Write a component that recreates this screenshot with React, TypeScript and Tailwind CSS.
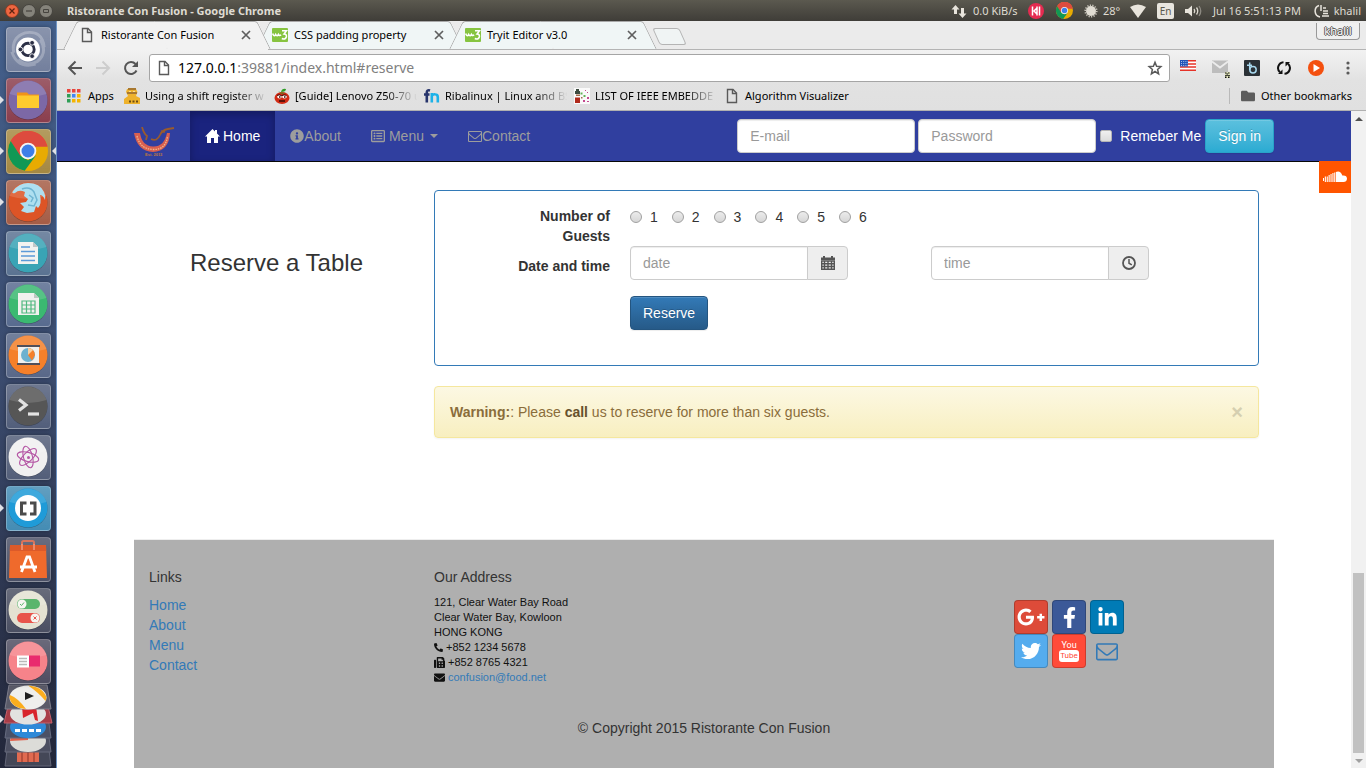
import React from 'react';
import {
  FaEnvelope,
  FaFacebookF,
  FaFax,
  FaFolder,
  FaGooglePlusG,
  FaInfoCircle,
  FaLinkedinIn,
  FaPhoneAlt,
  FaRegListAlt,
  FaTwitter,
} from 'react-icons/fa';

type Kids = { children?: React.ReactNode };

const UI = "font-['Noto_Sans','Open_Sans',sans-serif]";

/* ---------- shared icons ---------- */

function PageIcon({ className = '' }: { className?: string }) {
  return (
    <svg viewBox="0 0 16 16" className={`size-4 shrink-0 ${className}`} fill="none" stroke="#5a5a5a" strokeWidth="1.4" aria-hidden="true">
      <path d="M3.5 1.5h5.5l3.5 3.5v9.5h-9z" />
      <path d="M8.5 1.5v4h4" />
    </svg>
  );
}

function ChromeLogo({ className = '' }: { className?: string }) {
  return (
    <svg viewBox="0 0 48 48" className={className} aria-hidden="true">
      <circle cx="24" cy="24" r="24" fill="#e8ab02" />
      <path d="M24 13h21.300A24 24 0 0 0 3.200 12L14 30z" fill="#dd4b3e" />
      <path d="M24 19h23.500A24 24 0 0 0 3.200 12L14 30z" fill="#dd4b3e" />
      <path d="M3.200 12A24 24 0 0 0 20 47.700L33.500 29.500 24 35 14.500 29.500z" fill="#109855" />
      <circle cx="24" cy="24" r="10" fill="#f5f5f5" />
      <circle cx="24" cy="24" r="7.800" fill="#3e7ee8" />
    </svg>
  );
}

function W3Icon() {
  return (
    <svg viewBox="0 0 16 16" className="size-4 shrink-0" aria-hidden="true">
      <rect y="1" width="16" height="14" rx="1" fill="#86c440" />
      <path d="M1 6.500v1q1.300 2.500 2.700 0 1.300 2.500 2.700 0 .6 1.500 2.800.5" fill="none" stroke="#fff" strokeWidth="1.600" />
      <path d="M10 3.700h4.500L12 7q2.800.2 2.300 3-.8 3-4.500 1.500" fill="none" stroke="#fff" strokeWidth="1.600" />
    </svg>
  );
}

function CloseIcon() {
  return (
    <svg viewBox="0 0 10 10" className="size-[10px]" stroke="#5f5f5f" strokeWidth="1.700" aria-hidden="true">
      <path d="M1 1l8 8M9 1l-8 8" />
    </svg>
  );
}

function EnvelopeOutline({ className = '' }: { className?: string }) {
  return (
    <svg viewBox="0 0 1792 1792" fill="currentColor" className={className} aria-hidden="true">
      <path d="M1664 1504v-768q-32 36-69 66-268 206-426 338-51 43-83 67t-86.500 48.500-102.500 24.500h-2q-48 0-102.500-24.500t-86.500-48.500-83-67q-158-132-426-338-37-30-69-66v768q0 13 9.500 22.500t22.500 9.500h1472q13 0 22.500-9.500t9.500-22.500zm0-1051v-24.500l-.5-13-3-12.500-5.500-9-9-7.500-14-2.500h-1472q-13 0-22.500 9.500t-9.500 22.500q0 168 147 284 193 152 401 317 6 5 35 29.500t46 37.500 44.500 31.500 50.500 27.500 43 9h2q20 0 43-9t50.500-27.500 44.500-31.500 46-37.500 35-29.500q208-165 401-317 54-43 100.500-115.500t46.500-131.500zm128-37v1088q0 66-47 113t-113 47h-1472q-66 0-113-47t-47-113v-1088q0-66 47-113t113-47h1472q66 0 113 47t47 113z" />
    </svg>
  );
}

/* ---------- desktop top panel ---------- */

function TopPanel() {
  return (
    <header className={`flex h-[21px] shrink-0 items-center bg-linear-to-b from-[#5b594f] to-[#3f3d38] pr-[3px] text-[11px] leading-4 text-[#dfdbd2] ${UI}`}>
      <div className="flex gap-[3px] pl-[5px]">
        <button aria-label="Close window" className="grid size-[14px] place-items-center rounded-full border border-[#8c3a20] bg-[#ee6640]">
          <svg viewBox="0 0 6 6" className="size-[6px]" stroke="#5b2211" strokeWidth="1.200"><path d="M.5.500l5 5M5.500.500l-5 5" /></svg>
        </button>
        <button aria-label="Minimize window" className="grid size-[14px] place-items-center rounded-full border border-[#45433e] bg-[#85837b]">
          <svg viewBox="0 0 6 6" className="size-[6px]" stroke="#46443f" strokeWidth="1.200"><path d="M0 3h6" /></svg>
        </button>
        <button aria-label="Restore window" className="grid size-[14px] place-items-center rounded-full border border-[#45433e] bg-[#85837b]">
          <svg viewBox="0 0 6 6" className="size-[6px]" fill="none" stroke="#46443f"><path d="M.5 1.500h5v3h-5z" /></svg>
        </button>
      </div>
      <h1 className="flex-1 pl-[14px] font-bold whitespace-nowrap">Ristorante Con Fusion - Google Chrome</h1>
      <div className="flex items-center whitespace-nowrap">
        <span className="flex w-[71px] items-center gap-[6px]">
          <svg viewBox="0 0 16 16" className="size-4" fill="#e8e4dc" aria-hidden="true">
            <path d="M4.500 2 8.500 6.500H6V11H3V6.500H.5zM11.500 15 7.500 10.500H10V5h3v5.500h2.500z" />
          </svg>
          0.0 KiB/s
        </span>
        <span className="w-7">
          <svg viewBox="0 0 16 16" className="mx-auto size-4" aria-hidden="true">
            <circle cx="8" cy="8" r="8" fill="#e52b50" />
            <path d="M4.500 3.500v9M11.500 3.500v9M9 3.500V12.500M9.500 4.500 6 8l3.500 3.500" stroke="#fff" strokeWidth="1.500" fill="none" />
          </svg>
        </span>
        <span className="w-7"><ChromeLogo className="mx-auto size-[17px]" /></span>
        <span className="flex w-[47px] items-center gap-[5px] pl-[6px]">
          <svg viewBox="0 0 14 14" className="size-[14px]" aria-hidden="true">
            <circle cx="7" cy="7" r="5" fill="#e0dcd2" />
            <circle cx="7" cy="7" r="5.700" fill="none" stroke="#c8c4ba" strokeWidth="1.800" strokeDasharray="1.200 1.300" />
          </svg>
          28°
        </span>
        <span className="w-[25px]">
          <svg viewBox="0 0 16 14" className="mx-auto h-[14px] w-4" fill="#e8e4dc" aria-hidden="true"><path d="M0 3q8-5 16 0L8 14z" /></svg>
        </span>
        <span className="flex w-[31px] justify-center">
          <span className="rounded-[2px] bg-[#e8e5de] px-[3px] text-[10px] text-[#5b594f]">En</span>
        </span>
        <span className="w-6">
          <svg viewBox="0 0 18 14" className="mx-auto h-[14px] w-[18px]" fill="none" stroke="#dfdbd2" strokeWidth="1.300" aria-hidden="true">
            <path d="M1 5h3l4-3.500v11L4 9H1z" fill="#e8e4dc" stroke="none" />
            <path d="M10 5q1.500 2 0 4M12.500 3.500q2.500 3.500 0 7" />
            <path d="M15 2q3.500 5 0 10" stroke="#8d8a82" />
          </svg>
        </span>
        <span className="w-[104px] text-center">Jul 16 5:51:13 PM</span>
        <span className="flex w-[54px] items-center justify-between pr-[2px] pl-[5px]">
          <svg viewBox="0 0 16 14" className="h-[14px] w-4" fill="none" stroke="#e8e4dc" strokeWidth="1.500" aria-hidden="true">
            <path d="M5 1.500A6 6 0 0 0 6 13M7 1v6M9 4h3M9 7h5M9 9.500h5M8 12h7" />
          </svg>
          khalil
        </span>
      </div>
    </header>
  );
}

/* ---------- launcher ---------- */

function Disc({ color, children }: Kids & { color: string }) {
  return (
    <svg viewBox="0 0 40 40" className="size-10" aria-hidden="true">
      <circle cx="20" cy="20.500" r="19.500" fill="#000" opacity=".3" />
      <circle cx="20" cy="20" r="19.500" fill={color} />
      <path d="M1.500 14A19.500 19.500 0 0 1 38.500 14Q20 20 1.500 14z" fill="#fff" opacity=".14" />
      {children}
    </svg>
  );
}

const apps: { name: string; tile: string; running?: boolean; icon: React.ReactNode }[] = [
  {
    name: 'Search your computer',
    tile: 'bg-[#6c7998]',
    icon: (
      <svg viewBox="0 0 42 42" className="size-10" aria-hidden="true">
        <g fill="none" stroke="#fff" strokeWidth="3" opacity=".25">
          <path d="M6 25Q3 9 18 4q18-3 20 15" />
          <path d="M34 11q8 14-3 23-12 6-20-2" />
          <path d="M29 37Q10 42 4 24" />
        </g>
        <circle cx="21" cy="21.500" r="12.500" fill="#fff" />
        <circle cx="21" cy="21.500" r="6.500" fill="none" stroke="#2b2f45" strokeWidth="3" />
        <g fill="#2b2f45" stroke="#fff" strokeWidth=".9">
          <circle cx="13" cy="21.500" r="2.500" />
          <circle cx="25.300" cy="14.500" r="2.500" />
          <circle cx="25.300" cy="28.500" r="2.500" />
        </g>
      </svg>
    ),
  },
  {
    name: 'Files',
    tile: 'bg-[#843444]',
    running: true,
    icon: (
      <Disc color="#7c68a6">
        <path d="M9 12.500h10l2 2H31v4H9z" fill="#f09319" />
        <path d="M9 15.500h22v12.500H9z" fill="#fecb2e" />
      </Disc>
    ),
  },
  { name: 'Google Chrome', tile: 'bg-[#a08238]', running: true, icon: <ChromeLogo className="size-10" /> },
  {
    name: 'Firefox',
    tile: 'bg-[#a0543c]',
    running: true,
    icon: (
      <Disc color="#dd5426">
        <path d="M5 9Q11 1 20 1q12 0 16 9 2 4 1 8-2-5-5-5 2 9-2 13l-2-2-2 6-7 1-6-2 3-4-4-4 6-1 2-3-4-3 1-4q-6-3-10 1-4 1-2-2z" fill="#aedff0" />
        <path d="M14 7q8-3 12 3l3 8-3 6-6-1M21 13l4 3-2 4" fill="none" stroke="#6fb5d2" strokeWidth="1.500" />
      </Disc>
    ),
  },
  {
    name: 'Writer',
    tile: 'bg-[#526b8c]',
    icon: (
      <Disc color="#39a4b5">
        <path d="M10 9h15l5 5v17H10z" fill="#f3f3f0" />
        <path d="M25 9v5h5z" fill="#c2c8c8" />
        <path d="M13 14h9M13 18.500h14M13 23h14M13 27.500h14" stroke="#5b9ad8" strokeWidth="1.600" />
      </Disc>
    ),
  },
  {
    name: 'Calc',
    tile: 'bg-[#4f6389]',
    icon: (
      <Disc color="#3bb971">
        <path d="M10 9h16l5 5v17H10z" fill="#f1f1ee" />
        <path d="M26 9v5h5z" fill="#bfc8c2" />
        <path d="M14 17h13v12H14zM14 21h13M14 25h13M18.500 17v12M23 17v12" fill="none" stroke="#52b981" strokeWidth="1.200" />
      </Disc>
    ),
  },
  {
    name: 'Impress',
    tile: 'bg-[#506082]',
    icon: (
      <Disc color="#f5802a">
        <path d="M10 11h21v17H10z" fill="#f1f1ee" />
        <path d="M9 11h23M9 29h23" stroke="#50505a" strokeWidth="1.800" />
        <circle cx="20" cy="20" r="7" fill="#6db1cf" />
        <path d="M20 20v-7a7 7 0 0 1 7 7l-3 5.500z" fill="#f5802a" />
        <path d="M20 20v-7a7 7 0 0 1 5 2z" fill="#f7cfa0" />
      </Disc>
    ),
  },
  {
    name: 'Terminal',
    tile: 'bg-[#495674]',
    icon: (
      <Disc color="#565656">
        <path d="M11 13.500l7 5.500-7 5.500" fill="none" stroke="#e3e3e3" strokeWidth="3.200" />
        <path d="M20 28h11" stroke="#e3e3e3" strokeWidth="3.200" />
      </Disc>
    ),
  },
  {
    name: 'Atom',
    tile: 'bg-[#4a5672]',
    icon: (
      <Disc color="#f0f0f0">
        <g fill="none" stroke="#b557a5" strokeWidth="1.100">
          <ellipse cx="20" cy="20" rx="11" ry="4.500" transform="rotate(15 20 20)" />
          <ellipse cx="20" cy="20" rx="11" ry="4.500" transform="rotate(75 20 20)" />
          <ellipse cx="20" cy="20" rx="11" ry="4.500" transform="rotate(135 20 20)" />
        </g>
        <circle cx="20.500" cy="20.500" r="1.500" fill="#b557a5" />
      </Disc>
    ),
  },
  {
    name: 'Brackets',
    tile: 'bg-[#3a86b0]',
    running: true,
    icon: (
      <Disc color="#1f9bd8">
        <circle cx="20" cy="20" r="13" fill="#fff" />
        <path d="M18.500 15h-5v11h5M22 15h5v11h-5" fill="none" stroke="#4b4b4b" strokeWidth="3" />
      </Disc>
    ),
  },
  {
    name: 'Ubuntu Software',
    tile: 'bg-[#42485f]',
    icon: (
      <svg viewBox="0 0 40 40" className="size-10" aria-hidden="true">
        <path d="M14 11V3.500q0-1.500 1.500-1.500h9q1.500 0 1.500 1.500V11" fill="none" stroke="#d9745c" strokeWidth="2" />
        <path d="M2 6h36l1 33H1z" fill="#ef6a2c" />
        <path d="M2 6h36l.2 6H1.800z" fill="#dc5a2a" />
        <path d="M14 11V5M26 11V5" stroke="#f19a80" strokeWidth="1.500" />
        <path d="M13.500 33 19 18h2.500L27 33M12 28h17" fill="none" stroke="#fff" strokeWidth="2.800" />
      </svg>
    ),
  },
  {
    name: 'Tweak Tool',
    tile: 'bg-[#41465a]',
    icon: (
      <Disc color="#e4e2d2">
        <rect x="9" y="9" width="23" height="10" rx="5" fill="#5ab56c" />
        <circle cx="14" cy="14" r="4.500" fill="#f6f6f0" />
        <path d="M12 14l1.500 1.500 2.500-3" fill="none" stroke="#5ab56c" />
        <rect x="9" y="23" width="23" height="10" rx="5" fill="#e8544a" />
        <circle cx="27" cy="28" r="4.500" fill="#f6f6f0" />
        <path d="M25.500 26.500l3 3m0-3l-3 3" stroke="#e8544a" />
      </Disc>
    ),
  },
  {
    name: 'Reader',
    tile: 'bg-[#454459]',
    icon: (
      <Disc color="#f6838a">
        <path d="M9 14.500h12v12H9z" fill="#fff" />
        <path d="M21 14.500h11v11H21z" fill="#e92b6e" />
        <path d="M11 17.500h8M11 20.500h8M11 23.500h8" stroke="#b9b9b9" strokeWidth="1.300" />
      </Disc>
    ),
  },
];

function Launcher() {
  return (
    <nav aria-label="Launcher" className="flex w-[57px] shrink-0 flex-col overflow-hidden border-r border-[#6e94c4] bg-linear-to-b from-[#44608c] via-[#3a4a6c] to-[#222639] pt-[6px]">
      <ul className="flex shrink-0 flex-col gap-[6px] pl-[6px]">
        {apps.map((app) => (
          <li key={app.name} className="relative">
            {app.running && <span className="absolute top-[18px] -left-[6px] border-y-4 border-l-4 border-y-transparent border-l-[#dfe1e6]" />}
            <button
              aria-label={app.name}
              className={`flex size-[45px] items-start rounded-[4px] border border-white/25 bg-linear-to-b from-white/20 to-white/5 p-px shadow-[0_0_4px_rgba(0,0,0,0.35)] ${app.tile}`}
            >
              {app.icon}
            </button>
            {app.name === 'Google Chrome' && <span className="absolute top-[18px] right-0 border-y-4 border-r-4 border-y-transparent border-r-[#dfe1e6]" />}
          </li>
        ))}
      </ul>
      <svg viewBox="0 0 56 84" className="h-[84px] w-14 shrink-0" aria-hidden="true">
        <path d="M8 58h40l3 24H5z" fill="#444757" stroke="#646779" />
        <path d="M17 64h22v14H17z" fill="#e06a50" />
        <path d="M22 66v12M28 66v12M34 66v12" stroke="#a84535" strokeWidth="1.500" />
        <path d="M8 46h40l3 22H5z" fill="#4c4f61" stroke="#676a7c" />
        <ellipse cx="28" cy="57" rx="18" ry="11" fill="#dcdcd8" />
        <path d="M10 57q2-10 18-12v11z" fill="#e2614b" />
        <path d="M8 32h40l3 22H5z" fill="#4c5166" stroke="#676c80" />
        <ellipse cx="28" cy="43" rx="18" ry="11" fill="#2d89d8" />
        <path d="M15 46.500h26" stroke="#fff" strokeWidth="3" strokeDasharray="5 2" />
        <path d="M9 18h38l5 21H4z" fill="#a83d47" stroke="#c4606a" />
        <ellipse cx="28" cy="30" rx="18" ry="10.500" fill="#e2e2e0" />
        <path d="M22 22h14l2 15-3-1-2-7-10 5z" fill="#d8252c" />
        <path d="M9 1h38l4 24H5z" fill="#5b5b69" stroke="#7e7e8c" />
        <ellipse cx="28" cy="13.500" rx="18.500" ry="12" fill="#efefed" />
        <path d="M10 11q8 3 16 14Q11 24 9.500 13zM28 1.500q15 1 18.500 12l-1 3.500Q38 8 28 1.500z" fill="#fbad1e" />
        <path d="M25 8l9 4-9 4z" fill="#202020" />
        <path d="M0 31l4 4-4 4z" fill="#dfe1e6" />
      </svg>
    </nav>
  );
}

/* ---------- browser window ---------- */

function Tab({ title, active, icon }: { title: string; active?: boolean; icon: React.ReactNode }) {
  const fill = active ? 'bg-[#f2f2f2]' : 'bg-[#f0f6f6]';
  return (
    <div className={`relative h-7 w-[193px] ${active ? 'z-10' : ''}`}>
      <div className="absolute inset-0 flex">
        <span className={`-mr-3 flex-1 -skew-x-[26deg] rounded-tl-[3px] border-t border-l border-[#a9a9a9] ${fill}`} />
        <span className={`flex-1 skew-x-[26deg] rounded-tr-[3px] border-t border-r border-[#a9a9a9] ${fill}`} />
      </div>
      {active && <span className="absolute inset-x-[-5px] -bottom-px h-px bg-[#f2f2f2]" />}
      <div className="relative flex h-full items-center pl-[9px]">
        {icon}
        <span className="flex-1 truncate pl-[6px]">{title}</span>
        <button aria-label={`Close ${title}`} className="mr-3 grid size-[11px] place-items-center">
          <CloseIcon />
        </button>
      </div>
    </div>
  );
}

function TabStrip() {
  return (
    <div className={`flex h-[29px] justify-between border-b border-[#b4b4b4] bg-[#ebebeb] pl-[13px] text-[11px] leading-4 text-black ${UI}`}>
      <div className="flex">
        <Tab active title="Ristorante Con Fusion" icon={<PageIcon />} />
        <Tab title="CSS padding property" icon={<W3Icon />} />
        <Tab title="Tryit Editor v3.0" icon={<W3Icon />} />
        <button aria-label="New tab" className="mt-[7px] ml-[7px] h-[17px] w-[27px] skew-x-[24deg] rounded-[3px] border border-[#b4b4b4] bg-[#f0f4f4]" />
      </div>
      <button className="mt-[2px] mr-[6px] h-[17px] w-[44px] rounded-b-[4px] border border-t-0 border-[#999] bg-[#f0f0f0] text-center leading-4 text-white text-shadow-[1px_0_0_#555,-1px_0_0_#555,0_1px_0_#555,0_-1px_0_#555]">khalil</button>
    </div>
  );
}

function Ext({ label, children }: Kids & { label: string }) {
  return (
    <button aria-label={label} className="grid size-8 place-items-center">
      {children}
    </button>
  );
}

function Toolbar() {
  return (
    <div className="flex h-9 items-center pr-[2px] pl-1">
      <button aria-label="Back" className="grid w-7 place-items-center">
        <svg viewBox="0 0 16 16" className="size-4" fill="none" stroke="#555" strokeWidth="2"><path d="M15 8H2M8.500 1.500 2 8l6.500 6.500" /></svg>
      </button>
      <button aria-label="Forward" className="grid w-7 place-items-center">
        <svg viewBox="0 0 16 16" className="size-4" fill="none" stroke="#cdcdcd" strokeWidth="2"><path d="M1 8h13M7.500 1.500 14 8l-6.500 6.500" /></svg>
      </button>
      <button aria-label="Reload" className="grid w-7 place-items-center">
        <svg viewBox="0 0 16 16" className="size-4" fill="none" stroke="#555" strokeWidth="2"><path d="M13.500 10.500A6 6 0 1 1 12.500 4" /><path d="M15 1v6H9z" fill="#555" stroke="none" /></svg>
      </button>
      <div className="ml-1 flex h-7 flex-1 items-center rounded-[3px] border border-[#a5a5a5] bg-white px-[6px]">
        <PageIcon />
        <a href="#reserve" className={`flex-1 pl-[6px] text-sm text-black ${UI}`}>
          127.0.0.1<span className="text-[#808080]">:39881/index.html#reserve</span>
        </a>
        <button aria-label="Bookmark this page">
          <svg viewBox="0 0 16 16" className="size-4" fill="none" stroke="#5a5a5a" strokeWidth="1.500"><path d="M8 2.200l1.600 4 4.300.4-3.300 2.900 1 4.300L8 11.500l-3.600 2.300 1-4.300-3.300-2.900 4.300-.4z" /></svg>
        </button>
      </div>
      <div className="ml-[2px] flex">
        <Ext label="Language">
          <svg viewBox="0 0 16 11" className="mb-[5px] h-[11px] w-4">
            <path d="M0 0h16v11H0z" fill="#fff" />
            <path d="M0 .8h16M0 4h16M0 7h16M0 10.200h16" stroke="#e63228" strokeWidth="1.600" />
            <path d="M0 0h8v6.500H0z" fill="#2454b8" />
            <path d="M1 1.500h7M1 3.500h7M1 5.500h7" stroke="#c7d8f5" strokeWidth=".8" strokeDasharray="1 1.200" />
          </svg>
        </Ext>
        <Ext label="Mail checker">
          <svg viewBox="0 0 20 20" className="size-5">
            <path d="M2 2.500h16V15H2z" fill="#bdbdbd" />
            <path d="M2 3.500l8 6 8-6" fill="none" stroke="#ececec" strokeWidth="1.800" />
            <path d="M15 14h5v6h-5z" fill="#dfe3b8" />
            <path d="M15 14.500h1.500v1H15zM18 14.500h1.500v1H18zM16.500 15.500h1.500v1h-1.500zM15 17h5v.8h-5zM15 18.500h1.500v1.500H15zM18 18.500h1.500v1.500H18z" fill="#111" />
          </svg>
        </Ext>
        <Ext label="Bitly">
          <svg viewBox="0 0 16 16" className="size-4" fill="none" stroke="#a8d8ee" strokeWidth="1.500">
            <rect width="16" height="16" rx="1" fill="#2b3136" stroke="none" />
            <path d="M5.700 2.500V10M3 5.200h5" />
            <circle cx="9" cy="9.700" r="3.200" />
          </svg>
        </Ext>
        <Ext label="Sync">
          <svg viewBox="0 0 16 16" className="size-4" fill="none" stroke="#111" strokeWidth="2">
            <path d="M7.500 2.200A5.800 5.800 0 0 0 4 12.300M8.500 13.800A5.800 5.800 0 0 0 12 3.700" />
            <path d="M2 14h4.500V9.500zM14 2H9.500v4.500z" fill="#111" stroke="none" />
          </svg>
        </Ext>
        <Ext label="Player">
          <svg viewBox="0 0 16 16" className="size-4"><circle cx="8" cy="8" r="8" fill="#f4500f" /><path d="M5.500 4v8L12 8z" fill="#fff" /></svg>
        </Ext>
        <Ext label="Menu">
          <svg viewBox="0 0 4 16" className="h-4 w-1" fill="#5a5a5a"><circle cx="2" cy="3" r="1.600" /><circle cx="2" cy="8" r="1.600" /><circle cx="2" cy="13" r="1.600" /></svg>
        </Ext>
      </div>
    </div>
  );
}

const bookmarks: { title: string; icon: React.ReactNode }[] = [
  {
    title: 'Using a shift register w',
    icon: (
      <svg viewBox="0 0 16 16" className="size-4 shrink-0" aria-hidden="true">
        <path d="M3 1h9l1.500 3-1.500 4 4 2v6H0v-5l4-3-2-4z" fill="#eeb22c" />
        <path d="M4 0h8v2H4zM3 4h10v2H3z" fill="#a87830" />
        <path d="M5 3.500h2M9 3.500h2" stroke="#f8dc90" />
        <path d="M5 13.500h9" stroke="#6b4a12" strokeWidth="2" strokeDasharray="2 1.500" />
      </svg>
    ),
  },
  {
    title: '[Guide] Lenovo Z50-70 u',
    icon: (
      <svg viewBox="0 0 16 16" className="size-4 shrink-0" aria-hidden="true">
        <ellipse cx="8" cy="10" rx="7.500" ry="6" fill="#d22a14" />
        <path d="M7 4Q8 0 12 1q0 3-5 3zM4 3l4 2 4-1-4 2z" fill="#2f9e27" />
        <ellipse cx="5.500" cy="8.800" rx="2.300" ry="1.700" fill="#fff" />
        <ellipse cx="10.500" cy="8.800" rx="2.300" ry="1.700" fill="#fff" />
        <path d="M3 7.300q2.500-1 4.500.3 2.500-1.300 5-.3" fill="none" stroke="#3a0a05" />
        <path d="M5 9h1.500M10 9h1.500M5 13h6" stroke="#3a0a05" strokeWidth="1.300" />
      </svg>
    ),
  },
  {
    title: 'Ribalinux | Linux and BS',
    icon: (
      <svg viewBox="0 0 16 16" className="size-4 shrink-0" fill="none" strokeWidth="2.600" aria-hidden="true">
        <path d="M6 2.500Q2.800 1.500 2.800 4.500V14.500M0 6.500h5.500" stroke="#27346b" />
        <path d="M7.800 14.500V5M7.800 8q1-2 3.500-1.700 2.500.2 2.500 3v5.200" stroke="#1cb2e8" />
      </svg>
    ),
  },
  {
    title: 'LIST OF IEEE EMBEDDE',
    icon: (
      <svg viewBox="0 0 16 16" className="size-4 shrink-0" aria-hidden="true">
        <path d="M0 0h16v16H0z" fill="#fafafa" />
        <path d="M2 1h3v2h1v3H1V3h1z" fill="#3c4b3f" />
        <path d="M1 9.500h5V15H1z" fill="#b02a1c" />
        <path d="M6.500 4.500h2v2h-2zM9.500 7h2v2h-2z" fill="#62b158" />
        <path d="M11 2h1v1h-1zM13 4h1v1h-1zM9 12h2v2H9zM13 9h2v2h-2zM13 13h2v1h-2z" fill="#c44a90" />
        <path d="M2 6.500h4v1.500H2zM7 9h1.500v1.500H7z" fill="#a06a4a" />
      </svg>
    ),
  },
  { title: 'Algorithm Visualizer', icon: <PageIcon /> },
];

const appColors = ['#e8453c', '#e8453c', '#e8453c', '#2f9e56', '#4285f4', '#f5b400', '#2f9e56', '#f5b400', '#f5b400'];

function BookmarksBar() {
  return (
    <div className={`flex h-[25px] items-center border-b border-[#b0b0b0] pb-[5px] pl-[10px] text-[11px] leading-4 text-black ${UI}`}>
      <a href="#apps" className="flex w-[57px] items-center gap-[7px]">
        <svg viewBox="0 0 14 14" className="size-[14px]" aria-hidden="true">
          {appColors.map((c, i) => (
            <rect key={i} x={(i % 3) * 5} y={Math.floor(i / 3) * 5} width="3.500" height="3.500" fill={c} />
          ))}
        </svg>
        Apps
      </a>
      {bookmarks.map((b) => (
        <a key={b.title} href="#bookmark" className="flex w-[150px] items-center gap-[5px]">
          {b.icon}
          <span className={`flex-1 whitespace-nowrap ${b.title.startsWith('Algo') ? '' : 'mask-r-from-70% mask-r-to-95%'}`}>{b.title}</span>
        </a>
      ))}
      <a href="#other" className="ml-auto flex items-center gap-[6px] border-l border-[#b9b9b9] pr-[14px] pl-[11px]">
        <FaFolder size={14} color="#5c5c5c" />
        Other bookmarks
      </a>
    </div>
  );
}

/* ---------- web page ---------- */

function Logo() {
  return (
    <svg viewBox="0 0 41 30" className="h-[30px] w-[41px]" aria-hidden="true">
      <path d="M0 6h6q2 13 13 13.500T33 6h3q-1 18-17 19Q3 24 0 6z" fill="#d85f50" />
      <path d="M3 9q3 13 16 13.500T33.500 9" fill="none" stroke="#efb78b" strokeWidth="1.300" strokeDasharray="1.500 1" />
      <path d="M8 0q2 7 5 9l-1 4M17 12q6 3 9-4 2-5 8-6l6-1M27 4l4 1" fill="none" stroke="#9a5b2c" strokeWidth="1.800" />
      <text x="11" y="29" fontSize="4" fontWeight="bold" fontFamily="Liberation Sans" fill="#c07a3a">Est. 2013</text>
    </svg>
  );
}

const field =
  'h-[34px] min-w-0 rounded-[4px] border border-[#ccc] bg-white px-3 text-sm text-[#555] shadow-[inset_0_1px_1px_rgba(0,0,0,0.075)] placeholder:text-[#999]';

function Navbar() {
  return (
    <div className="border-b border-[#080808] bg-[#303f9f]">
      <div className="mx-auto flex max-w-[1140px] items-center justify-between">
        <nav className="flex h-[50px] text-[#9d9d9d]">
          <a href="#home" aria-label="Ristorante Con Fusion" className="flex w-14 items-center pt-[11px]"><Logo /></a>
          <a href="#home" className="flex items-center gap-[3px] bg-[#1a237e] px-[15px] text-white shadow-[inset_0_3px_9px_rgba(0,0,0,0.25)]">
            <svg viewBox="0 0 15 14" className="h-[14px] w-[15px]" fill="currentColor" aria-hidden="true">
              <path d="M7.500 0 0 7.500h2V14h4V9h3v5h4V7.500h2L12 4.400V1h-2v1.500z" />
            </svg>
            Home
          </a>
          <a href="#about" className="flex items-center px-[15px]"><FaInfoCircle size={14} />About</a>
          <a href="#menu" className="flex items-center gap-1 px-[15px]">
            <FaRegListAlt size={14} />Menu
            <span className="ml-[2px] border-x-4 border-t-4 border-x-transparent border-t-current" />
          </a>
          <a href="#contact" className="flex items-center px-[15px]"><EnvelopeOutline className="size-[14px]" />Contact</a>
        </nav>
        <form className="flex items-center gap-[3px] text-white" onSubmit={(e) => e.preventDefault()}>
          <input type="email" aria-label="E-mail" placeholder="E-mail" className={`w-[178px] ${field}`} />
          <input type="password" aria-label="Password" placeholder="Password" className={`w-[178px] ${field}`} />
          <label className="flex items-center gap-2 px-px whitespace-nowrap">
            <input type="checkbox" className="size-3 appearance-none rounded-[2px] border border-[#b5b5b5] bg-linear-to-b from-[#f0f0f0] to-[#dcdcdc]" />
            Remeber Me
          </label>
          <button className="h-[34px] rounded-[4px] border border-[#28a4c9] bg-linear-to-b from-[#5bc0de] to-[#2aabd2] px-3 whitespace-nowrap shadow-[inset_0_1px_0_rgba(255,255,255,0.15),0_1px_1px_rgba(0,0,0,0.075)] text-shadow-[0_-1px_0_rgba(0,0,0,0.2)]">
            Sign in
          </button>
        </form>
      </div>
    </div>
  );
}

function AddonField({ name, children }: Kids & { name: string }) {
  return (
    <div className="flex w-[301px]">
      <input type="text" aria-label={name} placeholder={name} className={`w-[178px] rounded-r-none ${field}`} />
      <span className="-ml-px grid h-[34px] w-[41px] place-items-center rounded-r-[4px] border border-[#ccc] bg-[#eee] text-[#555]">
        {children}
      </span>
    </div>
  );
}

function ReserveForm() {
  return (
    <form className="rounded-[4px] border border-[#337ab7] px-[75px] pt-[15px] pb-[35px]" onSubmit={(e) => e.preventDefault()}>
      <div className="grid grid-cols-[100px_1fr] gap-x-5">
        <div id="guests" className="h-10 text-right font-bold">Number of Guests</div>
        <div role="radiogroup" aria-labelledby="guests" className="flex h-[22px] items-center gap-[14px]">
          {[1, 2, 3, 4, 5, 6].map((n) => (
            <label key={n} className="flex items-center gap-2">
              <input type="radio" name="guests" value={n} className="size-3 appearance-none rounded-full border border-[#a0a0a0] bg-linear-to-b from-[#ececec] to-[#d6d6d6]" />
              {n}
            </label>
          ))}
        </div>
        <div className="pt-[10px] text-right font-bold">Date and time</div>
        <div className="flex">
          <AddonField name="date">
            <svg viewBox="0 0 14 14" className="size-[14px]" fill="none" stroke="currentColor" aria-hidden="true">
              <path d="M0 4V1.500h2V0h2v1.500h6V0h2v1.500h2V4z" fill="currentColor" stroke="none" />
              <path d="M.7 5h12.600v8.300H.7zM.7 7.700h12.600M.7 10.500h12.600M3.500 5v8.300M7 5v8.300M10.500 5v8.300" strokeWidth="1.400" />
            </svg>
          </AddonField>
          <AddonField name="time">
            <svg viewBox="0 0 14 14" className="size-[14px]" fill="none" stroke="currentColor" strokeWidth="1.800" aria-hidden="true">
              <circle cx="7" cy="7" r="6" />
              <path d="M7 3v4.200l2.800 1.600" strokeWidth="1.500" />
            </svg>
          </AddonField>
        </div>
        <button className="col-start-2 mt-4 h-[34px] justify-self-start rounded-[4px] border border-[#245580] bg-linear-to-b from-[#337ab7] to-[#265a88] px-3 text-white shadow-[inset_0_1px_0_rgba(255,255,255,0.15),0_1px_1px_rgba(0,0,0,0.075)] text-shadow-[0_-1px_0_rgba(0,0,0,0.2)]">
          Reserve
        </button>
      </div>
    </form>
  );
}

const social: { name: string; box: string; icon: React.ReactNode }[] = [
  { name: 'Google Plus', box: 'border border-black/20 bg-[#dd4b39] text-white', icon: <FaGooglePlusG size={28} /> },
  { name: 'Facebook', box: 'border border-black/20 bg-[#3b5998] text-white', icon: <FaFacebookF size={21} /> },
  { name: 'LinkedIn', box: 'border border-black/20 bg-[#007bb6] text-white', icon: <FaLinkedinIn size={21} /> },
  { name: 'Twitter', box: 'border border-black/20 bg-[#55acee] text-white', icon: <FaTwitter size={20} /> },
  {
    name: 'YouTube',
    box: 'border border-black/20 bg-[#ff4b39] text-white',
    icon: (
      <span className="flex flex-col items-center font-['Roboto',sans-serif] text-[9px] leading-[10px]">
        <span>You</span>
        <span className="rounded-[3px] bg-white px-px py-px text-[8px] text-[#ff4b39]">Tube</span>
      </span>
    ),
  },
  { name: 'E-mail', box: 'text-[#337ab7]', icon: <EnvelopeOutline className="size-[22px]" /> },
];

function Footer() {
  return (
    <footer className="mx-auto flex w-full max-w-[1140px] flex-1 flex-col border-t border-[#eee] bg-[#afafaf] pt-[27px]">
      <div className="grid grid-cols-4">
        <nav className="px-[15px]">
          <h5 className="mb-2">Links</h5>
          <ul className="text-[#337ab7]">
            {['Home', 'About', 'Menu', 'Contact'].map((l) => (
              <li key={l}><a href={`#${l.toLowerCase()}`}>{l}</a></li>
            ))}
          </ul>
        </nav>
        <div className="col-span-2 px-[15px]">
          <h5 className="mb-2">Our Address</h5>
          <address className="text-[11px] leading-[15px] text-[#111] not-italic">
            121, Clear Water Bay Road<br />
            Clear Water Bay, Kowloon<br />
            HONG KONG
            <div className="flex items-center gap-[3px]"><FaPhoneAlt size={9} />+852 1234 5678</div>
            <div className="flex items-center gap-[3px]"><FaFax size={11} />+852 8765 4321</div>
            <div className="flex items-center gap-[3px]"><FaEnvelope size={11} /><a href="mailto:confusion@food.net" className="text-[#337ab7]">confusion@food.net</a></div>
          </address>
        </div>
        <div className="flex flex-wrap content-start gap-x-1 pt-[33px] pr-[145px] pl-[25px]">
          {social.map((s) => (
            <a key={s.name} href="#social" aria-label={s.name} className={`grid size-[34px] place-items-center rounded-[4px] ${s.box}`}>
              {s.icon}
            </a>
          ))}
        </div>
      </div>
      <p className="mt-[33px] text-center">© Copyright 2015 Ristorante Con Fusion</p>
    </footer>
  );
}

function WebPage() {
  return (
    <main className="relative flex min-w-0 flex-1 flex-col bg-white font-['Liberation_Sans',Arial,sans-serif] text-sm leading-5 text-[#333]">
      <Navbar />
      <a href="#soundcloud" aria-label="SoundCloud" className="absolute top-[50px] right-0 grid size-8 place-items-center bg-[#ff5500]">
        <svg viewBox="0 0 24 12" className="h-3 w-6" fill="#fff" aria-hidden="true">
          <path d="M0 7h1v3H0zM1.800 5.500h1.100v5.500H1.800zM3.700 5.500h1.100V11H3.700zM5.600 4h1.100v7H5.600zM7.500 3h1.100v8H7.500zM9.400 2h1.100v9H9.400zM11.200 1.500h1V11h-1z" />
          <path d="M12.800.9Q17.500-1 19.300 4.500 24 4 24 7.800 23.600 11 20.500 11h-7.700z" />
        </svg>
      </a>
      <section id="reserve" className="mx-auto grid w-full max-w-[1140px] grid-cols-4 pt-7 pb-[101px]">
        <h2 className="px-[15px] pt-[60px] text-center text-2xl leading-[26px]">Reserve a Table</h2>
        <div className="col-span-3 px-[15px]">
          <ReserveForm />
          <div role="alert" className="mt-5 flex justify-between rounded-[4px] border border-[#f5e79e] bg-linear-to-b from-[#fcf8e3] to-[#f8efc0] p-[15px] text-[#8a6d3b] shadow-[0_1px_2px_rgba(0,0,0,0.05)]">
            <p><strong>Warning:</strong>: Please <a href="tel:+85212345678" className="font-bold text-[#66512c]">call</a> us to reserve for more than six guests.</p>
            <button aria-label="Dismiss" className="text-xl leading-4 font-bold text-[#d5cfb0]">×</button>
          </div>
        </div>
      </section>
      <Footer />
    </main>
  );
}

function Scrollbar() {
  return (
    <div aria-hidden="true" className="flex w-[15px] shrink-0 flex-col items-center justify-between bg-[#f1f1f1]">
      <span className="mt-[6px] border-x-4 border-b-4 border-x-transparent border-b-[#505050]" />
      <div className="flex flex-col items-center gap-[6px] pb-[5px]">
        <span className="h-[180px] w-[11px] bg-[#c1c1c1]" />
        <span className="border-x-4 border-t-4 border-x-transparent border-t-[#a0a0a0]" />
      </div>
    </div>
  );
}

export default function App() {
  return (
    <div className="flex h-screen flex-col overflow-hidden">
      <TopPanel />
      <div className="flex min-h-0 flex-1">
        <Launcher />
        <div className="flex min-w-0 flex-1 flex-col">
          <TabStrip />
          <div className="bg-linear-to-b from-[#f2f2f2] via-[#e2e2e2] to-[#e0e0e0]">
            <Toolbar />
            <BookmarksBar />
          </div>
          <div className="flex min-h-0 flex-1">
            <WebPage />
            <Scrollbar />
          </div>
        </div>
      </div>
    </div>
  );
}
